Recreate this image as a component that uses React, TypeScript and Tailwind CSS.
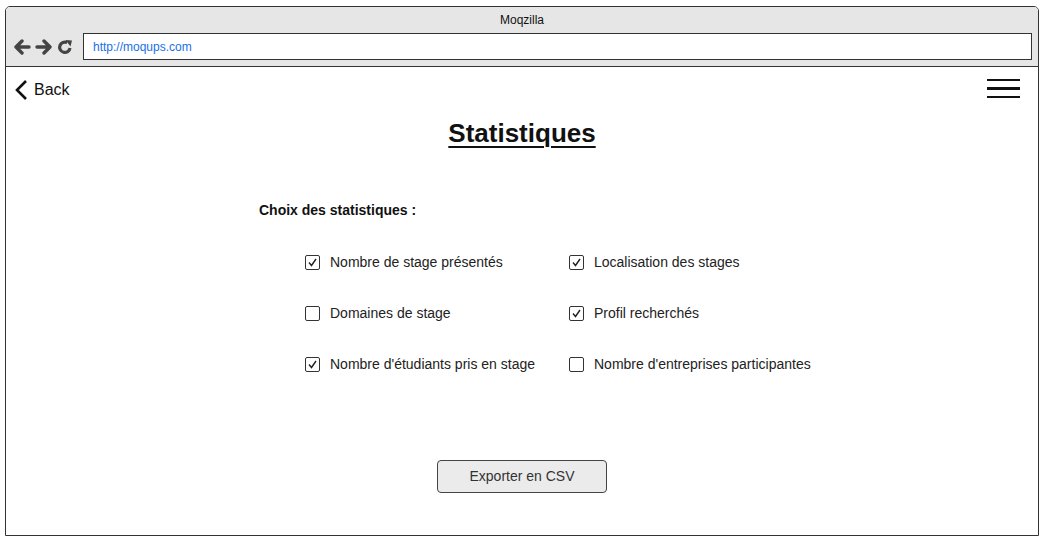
import React from "react";

const items = [
  { label: "Nombre de stage présentés", checked: true },
  { label: "Localisation des stages", checked: true },
  { label: "Domaines de stage", checked: false },
  { label: "Profil recherchés", checked: true },
  { label: "Nombre d'étudiants pris en stage", checked: true },
  { label: "Nombre d'entreprises participantes", checked: false },
];

const Check = ({ checked }: { checked: boolean }) => (
  <div className="w-[15px] h-[15px] rounded-[2px] border-[1.5px] border-[#333] bg-white flex items-center justify-center">
    {checked && (
      <svg width="11" height="11" viewBox="0 0 11 11">
        <path d="M2 5.5 L4.5 8.5 L9 2" fill="none" stroke="#222" strokeWidth="1.4" />
      </svg>
    )}
  </div>
);

export default function App() {
  return (
    <div className="w-[1054px] h-[544px] bg-white pt-[6px] pl-[5px]" style={{ fontFamily: "'Liberation Sans', Arial, sans-serif" }}>
      <div className="w-[1034px] h-[530px] border border-[#333] rounded-t-[5px] flex flex-col overflow-hidden">
        {/* browser chrome */}
        <div className="h-[60px] bg-[#e6e6e6] border-b border-[#333] flex flex-col">
          <div className="h-[26px] flex items-center justify-center text-[12px] text-[#111]">Moqzilla</div>
          <div className="flex items-center pl-[7px] pr-[6px]">
            <div className="flex items-center gap-[4px] w-[70px]">
              <svg width="18" height="16" viewBox="0 0 18 16">
                <path d="M9 2 L3 8 L9 14 M3 8 H16" fill="none" stroke="#444" strokeWidth="3.4" strokeLinejoin="round" strokeLinecap="round" />
              </svg>
              <svg width="18" height="16" viewBox="0 0 18 16">
                <path d="M9 2 L15 8 L9 14 M15 8 H2" fill="none" stroke="#444" strokeWidth="3.4" strokeLinejoin="round" strokeLinecap="round" />
              </svg>
              <svg width="16" height="16" viewBox="0 0 16 16">
                <path d="M13 9 A5.2 5.2 0 1 1 10.2 3.6" fill="none" stroke="#444" strokeWidth="3.2" />
                <path d="M8.5 1 L15 1.5 L13.5 7.5 Z" fill="#444" />
              </svg>
            </div>
            <div className="flex-1 h-[27px] bg-white border border-[#333] flex items-center pl-[9px] text-[12px] text-[#1a6fe8]">
              http://moqups.com
            </div>
          </div>
        </div>

        {/* page */}
        <div className="flex-1 flex flex-col">
          <div className="flex items-center justify-between pl-[7px] pr-[18px] pt-[11px]">
            <div className="flex items-center gap-[3px] text-[16px] text-[#111]">
              <svg width="18" height="22" viewBox="0 0 18 22">
                <path d="M13 2 L4 11 L13 20" fill="none" stroke="#111" strokeWidth="2.6" />
              </svg>
              Back
            </div>
            <div className="flex flex-col gap-[6px] w-[33px] -mt-[3px]">
              <div className="h-[2.5px] bg-[#111]" />
              <div className="h-[2.5px] bg-[#111]" />
              <div className="h-[2.5px] bg-[#111]" />
            </div>
          </div>

          <h1 className="text-center text-[26px] font-bold underline underline-offset-[4px] decoration-[2px] text-[#111] mt-[16px] leading-[30px]">
            Statistiques
          </h1>

          <div className="pl-[253px] mt-[52px] text-[14px] font-bold text-[#111]">Choix des statistiques :</div>

          <div className="grid grid-cols-[264px_auto] gap-y-[35px] pl-[299px] mt-[33px]">
            {items.map((it) => (
              <div key={it.label} className="flex items-center gap-[10px] text-[14px] text-[#222] h-[16px]">
                <Check checked={it.checked} />
                {it.label}
              </div>
            ))}
          </div>

          <div className="flex justify-center mt-[88px]">
            <button className="w-[170px] h-[33px] bg-[#ebebeb] border border-[#444] rounded-[4px] text-[14px] text-[#333]">
              Exporter en CSV
            </button>
          </div>
        </div>
      </div>
    </div>
  );
}
